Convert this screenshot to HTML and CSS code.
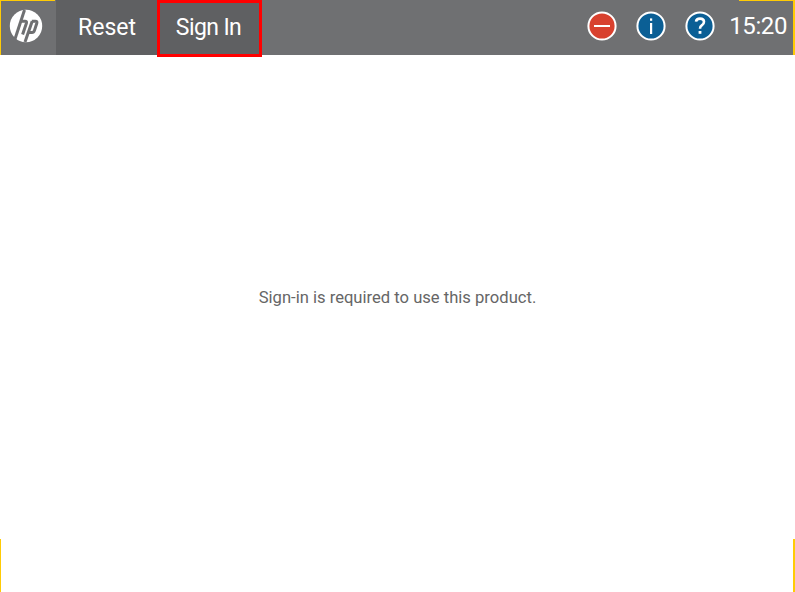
FILE: index.html
```html
<!DOCTYPE html>
<html lang="en">
<head>
<meta charset="utf-8">
<title>Sign In</title>
<link rel="stylesheet" href="styles.css">
</head>
<body>
<div class="screen">
  <header class="bar">
    <div class="home">
      <svg class="logo" width="34" height="34" viewBox="0 0 34 34">
        <circle cx="17" cy="17" r="16.2" fill="#fff"/>
        <g fill="none" stroke="#6f7072" stroke-width="3">
          <path d="M15.5 1 L6 30"/>
          <path d="M11 12.2 H16 Q18 12.2 17.4 14.2 L13.6 25.5"/>
          <path d="M23.2 12.2 L16 33"/>
          <path d="M22.8 12.2 H26.4 Q28.4 12.2 27.8 14.2 L25.4 21.6 Q24.8 23.4 23 23.4 H19"/>
        </g>
      </svg>
    </div>
    <button class="btn">Reset</button>
    <button class="btn btn-focus">Sign In</button>
    <div class="status">
      <svg class="ico" width="30" height="30" viewBox="0 0 30 30">
        <circle cx="15" cy="15" r="13.6" fill="#d8412f" stroke="#fff" stroke-width="2"/>
        <rect x="7" y="14" width="16" height="2" fill="#fff"/>
      </svg>
      <svg class="ico" width="30" height="30" viewBox="0 0 30 30">
        <circle cx="15" cy="15" r="13.6" fill="#0b5f95" stroke="#fff" stroke-width="2"/>
        <rect x="14" y="12" width="2.2" height="11" fill="#fff"/>
        <rect x="14" y="7.4" width="2.2" height="2.4" fill="#fff"/>
      </svg>
      <svg class="ico" width="30" height="30" viewBox="0 0 30 30">
        <circle cx="15" cy="15" r="13.6" fill="#0b5f95" stroke="#fff" stroke-width="2"/>
        <path d="M11 10.6 Q11.4 7.6 15 7.6 Q19 7.6 19 10.8 Q19 12.8 17 14.2 Q15 15.4 15 17.8" fill="none" stroke="#fff" stroke-width="2.6"/>
        <rect x="13.6" y="20" width="2.8" height="2.8" fill="#fff"/>
      </svg>
      <span class="clock">15:20</span>
    </div>
  </header>
  <main class="content">
    <p class="message">Sign-in is required to use this product.</p>
  </main>
  <i class="mark mark-tl-h"></i>
  <i class="mark mark-tl-v"></i>
  <i class="mark mark-tr-h"></i>
  <i class="mark mark-tr-v"></i>
  <i class="mark mark-bl"></i>
  <i class="mark mark-br"></i>
</div>
</body>
</html>
```
FILE: styles.css
```css
* { box-sizing: border-box; }
html, body { margin: 0; height: 100%; background: #fff; overflow: hidden; }
body { font-family: Roboto, "Noto Sans", sans-serif; }
.screen { position: relative; width: 795px; height: 592px; display: flex; flex-direction: column; }
.bar { height: 55px; background: #6f7072; display: flex; align-items: stretch; flex: none; }
.home { width: 56px; display: flex; align-items: center; justify-content: center; padding-right: 4px; padding-bottom: 6px; padding-top: 3px; }
.btn { border: 0; background: #5f6062; color: #fff; font: inherit; font-size: 23px; padding: 0 0 1px; cursor: pointer; }
.btn:nth-of-type(1) { width: 101px; padding-left: 1px; }
.btn-focus { width: 105px; height: 57px; border: 3px solid #f00; padding: 0 2px 3px 0; position: relative; letter-spacing: -0.6px; }
.status { margin-left: auto; display: flex; align-items: center; padding-right: 8px; padding-bottom: 3px; }
.ico { margin-right: 19px; display: block; }
.ico:nth-of-type(3) { margin-right: 14px; }
.clock { color: #fff; font-size: 24px; letter-spacing: -0.4px; }
.content { flex: 1; display: flex; align-items: flex-start; justify-content: center; padding-top: 232px; }
.message { margin: 0; font-size: 16.6px; line-height: 22px; color: #666; }
.mark { position: absolute; background: #ffcb05; display: block; }
.mark-tl-h { left: 0; top: 0; width: 55px; height: 1px; }
.mark-tl-v { left: 0; top: 0; width: 1px; height: 55px; }
.mark-tr-h { right: 0; top: 0; width: 56px; height: 1px; }
.mark-tr-v { right: 0; top: 0; width: 2px; height: 55px; }
.mark-bl { left: 0; bottom: 0; width: 1px; height: 53px; }
.mark-br { right: 0; bottom: 0; width: 2px; height: 53px; }
```
